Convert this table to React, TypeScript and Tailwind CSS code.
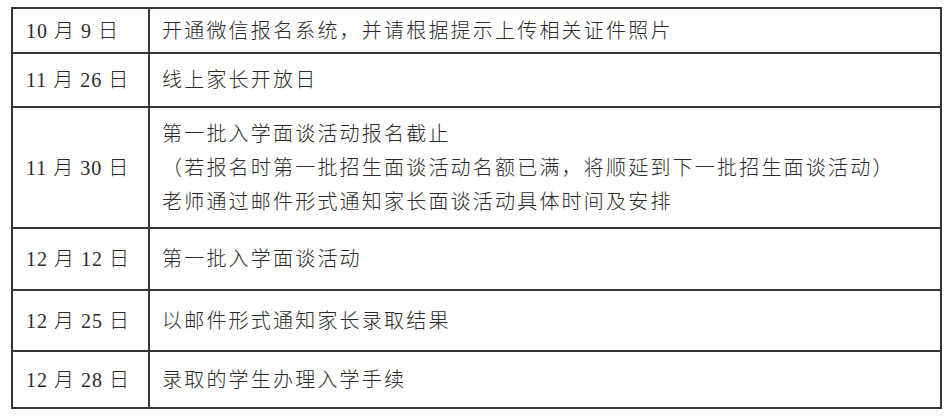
import React from 'react';

interface Row {
  date: string;
  lines: string[];
  h: string;
}

const rows: Row[] = [
  { date: '10 月 9 日', lines: ['开通微信报名系统，并请根据提示上传相关证件照片'], h: 'h-[43px]' },
  { date: '11 月 26 日', lines: ['线上家长开放日'], h: 'h-[54px]' },
  {
    date: '11 月 30 日',
    lines: [
      '第一批入学面谈活动报名截止',
      '（若报名时第一批招生面谈活动名额已满，将顺延到下一批招生面谈活动）',
      '老师通过邮件形式通知家长面谈活动具体时间及安排',
    ],
    h: 'h-[121px]',
  },
  { date: '12 月 12 日', lines: ['第一批入学面谈活动'], h: 'h-[62px]' },
  { date: '12 月 25 日', lines: ['以邮件形式通知家长录取结果'], h: 'h-[61px]' },
  { date: '12 月 28 日', lines: ['录取的学生办理入学手续'], h: 'h-[57px]' },
];

export default function App() {
  return (
    <div className="w-[947px] h-[419px] bg-white pt-[7px] pl-[11px] font-['Liberation_Serif','Noto_Sans_CJK_SC',serif] text-[20px] text-[#2a2a2a] font-light">
      <div className="w-[931px] border-2 border-[#363636] flex flex-col">
        {rows.map((r, i) => (
          <div
            key={r.date}
            className={`flex ${r.h} ${i > 0 ? 'border-t-2 border-[#363636]' : ''}`}
          >
            <div className="w-[137px] shrink-0 border-r-2 border-[#363636] flex items-center pl-[13px] tracking-[1px] whitespace-nowrap">
              {r.date}
            </div>
            <div className="flex-1 flex flex-col justify-center pl-[12px] leading-[34px] tracking-[2.2px] whitespace-nowrap">
              {r.lines.map((l) => (
                <div key={l}>{l}</div>
              ))}
            </div>
          </div>
        ))}
      </div>
    </div>
  );
}
